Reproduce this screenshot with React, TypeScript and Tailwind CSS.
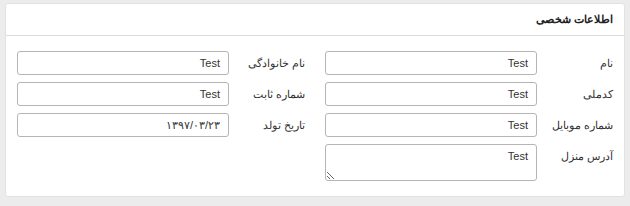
import React from "react";

const font = { fontFamily: '"Noto Sans", "Liberation Sans", sans-serif' };

function Field({ label, value, textarea }: { label: string; value: string; textarea?: boolean }) {
  return (
    <div className="flex items-start">
      <div className="w-[76px] shrink-0 text-[11px] text-[#333] leading-[24px] pr-0">{label}</div>
      {textarea ? (
        <textarea
          readOnly
          defaultValue={value}
          dir="rtl"
          className="w-[212px] h-[37px] border border-[#b5b5b5] rounded-[3px] bg-white px-[8px] py-[4px] text-[11px] text-[#333] leading-[14px] outline-none"
          style={{ fontFamily: '"Liberation Sans", Arial, sans-serif' }}
        />
      ) : (
        <div
          className="w-[212px] h-[24px] border border-[#b5b5b5] rounded-[3px] bg-white px-[8px] text-[11px] text-[#333] leading-[22px]"
          style={{ fontFamily: '"Liberation Sans", "Noto Sans", Arial, sans-serif' }}
        >
          {value}
        </div>
      )}
    </div>
  );
}

export default function App() {
  return (
    <div className="w-[630px] h-[206px] bg-[#ececec] pt-[3px] px-[5px]" style={font} dir="rtl">
      <div className="h-[194px] bg-white rounded-[3px] border border-[#e2e2e2]">
        <div className="h-[32px] border-b border-[#dcdcdc] pr-[11px] flex items-center text-[11px] font-bold text-[#222]">
          اطلاعات شخصی
        </div>
        <div className="flex gap-[20px] pr-[11px] pt-[15px]">
          <div className="flex flex-col gap-[7px]">
            <Field label="نام" value="Test" />
            <Field label="کدملی" value="Test" />
            <Field label="شماره موبایل" value="Test" />
            <Field label="آدرس منزل" value="Test" textarea />
          </div>
          <div className="flex flex-col gap-[7px]">
            <Field label="نام خانوادگی" value="Test" />
            <Field label="شماره ثابت" value="Test" />
            <Field label="تاریخ تولد" value="۱۳۹۷/۰۳/۲۳" />
          </div>
        </div>
      </div>
    </div>
  );
}
